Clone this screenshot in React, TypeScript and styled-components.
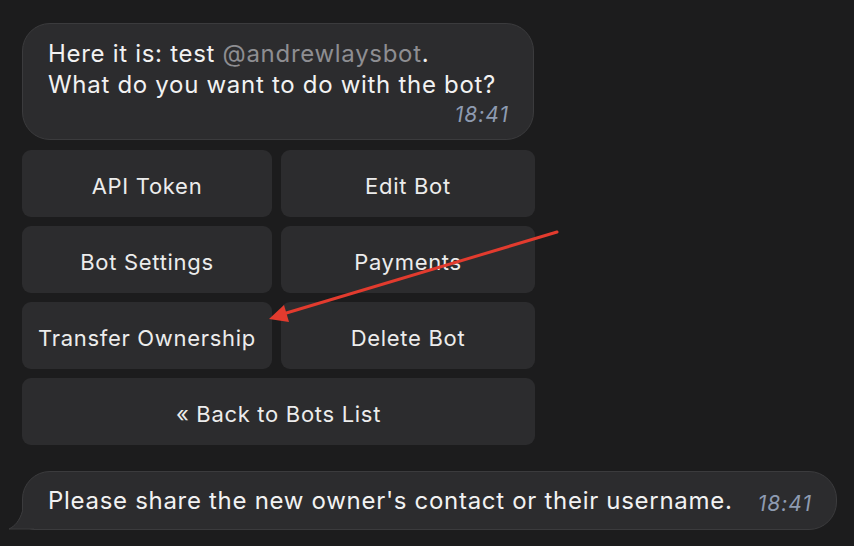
import React from 'react'
import styled, { createGlobalStyle } from 'styled-components'

const GlobalStyle = createGlobalStyle`
  html, body {
    margin: 0;
    padding: 0;
    background: #1c1c1d;
  }
  body {
    font-family: Inter, "Noto Sans", "Liberation Sans", sans-serif;
    color: #f2f2f2;
    -webkit-font-smoothing: antialiased;
  }
`

const Page = styled.div`
  position: relative;
  width: 854px;
  height: 546px;
  overflow: hidden;
  padding: 23px 0 0 22px;
  box-sizing: border-box;
`

const Column = styled.div`
  width: 513px;
  display: flex;
  flex-direction: column;
`

const Bubble = styled.div`
  box-sizing: border-box;
  width: 512px;
  height: 117px;
  background: #2c2c2e;
  border: 1px solid #3b3b3d;
  border-radius: 28px;
  padding: 14px 24px 0 25px;
  font-size: 24px;
  line-height: 31px;
  letter-spacing: 0.7px;
`

const Mention = styled.span`
  color: #8e8e92;
`

const Time = styled.div`
  text-align: right;
  font-size: 21px;
  font-style: italic;
  color: #8e9bb1;
  line-height: 24px;
  letter-spacing: 1px;
  margin-top: 3px;
`

const Keyboard = styled.div`
  display: grid;
  grid-template-columns: 250px 254px;
  grid-auto-rows: 67px;
  gap: 9px;
  margin-top: 10px;
`

const Key = styled.div<{ $wide?: boolean }>`
  grid-column: ${(p) => (p.$wide ? '1 / span 2' : 'auto')};
  background: #2c2c2e;
  border-radius: 9px;
  display: flex;
  align-items: center;
  justify-content: center;
  padding-top: 4px;
  box-sizing: border-box;
  font-size: 22px;
  color: #ececec;
  letter-spacing: 0.7px;
`

const Reply = styled.div`
  position: relative;
  box-sizing: border-box;
  margin-top: 26px;
  width: 815px;
  height: 59px;
  background: #2c2c2e;
  border: 1px solid #3b3b3d;
  border-radius: 28px;
  border-bottom-left-radius: 12px;
  display: flex;
  align-items: center;
  padding: 0 24px 0 25px;
  font-size: 24px;
  letter-spacing: 0.7px;
`

const ReplyTime = styled.span`
  margin-left: auto;
  font-size: 21px;
  font-style: italic;
  color: #8e9bb1;
  letter-spacing: 1px;
  padding-top: 6px;
`

const Tail = styled.svg`
  position: absolute;
  left: -15px;
  bottom: -1px;
`

const Arrow = styled.svg`
  position: absolute;
  left: 0;
  top: 0;
  pointer-events: none;
`

const keys = ['API Token', 'Edit Bot', 'Bot Settings', 'Payments', 'Transfer Ownership', 'Delete Bot']

const App = () => {
  return (
    <>
      <GlobalStyle />
      <Page>
        <Column>
          <Bubble>
            <div>
              Here it is: test <Mention>@andrewlaysbot</Mention>.
            </div>
            <div>What do you want to do with the bot?</div>
            <Time>18:41</Time>
          </Bubble>

          <Keyboard>
            {keys.map((k) => (
              <Key key={k}>{k}</Key>
            ))}
            <Key $wide>« Back to Bots List</Key>
          </Keyboard>
        </Column>

        <Reply>
          Please share the new owner's contact or their username.
          <ReplyTime>18:41</ReplyTime>
          <Tail width="26" height="22" viewBox="0 0 26 22">
            <path
              d="M26 0 L26 21 L1 21 C7 18 11 13 14 4 L16 0 Z"
              fill="#2c2c2e"
            />
            <path
              d="M14.5 3 C11.5 13 7 18 1 21 L26 21"
              fill="none"
              stroke="#3b3b3d"
              strokeWidth="1"
            />
          </Tail>
        </Reply>

        <Arrow width="854" height="546" viewBox="0 0 854 546">
          <line x1="557" y1="232" x2="283" y2="314" stroke="#e23b2e" strokeWidth="3" strokeLinecap="round" />
          <polygon points="269,319 284,305 289,322" fill="#e23b2e" />
        </Arrow>
      </Page>
    </>
  )
}

export default App
